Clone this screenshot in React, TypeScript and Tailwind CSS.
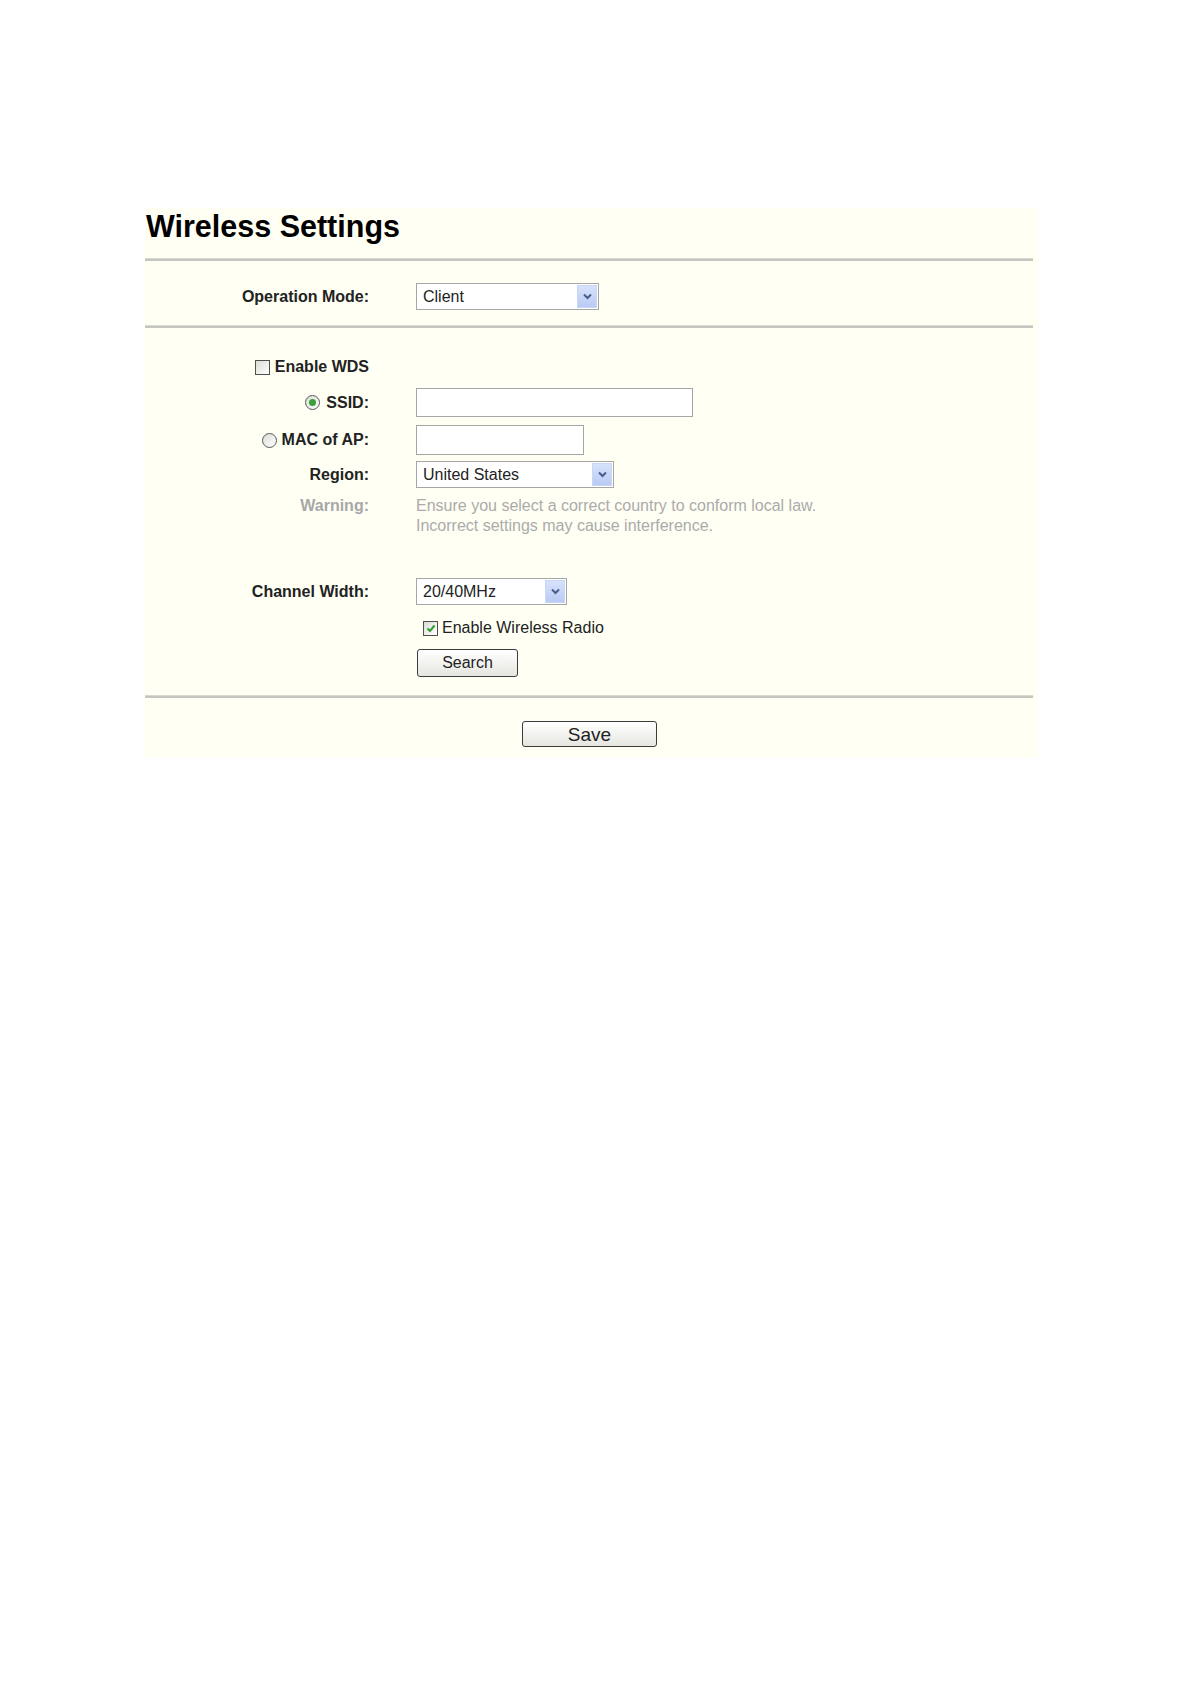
import React from "react";

function Chevron() {
  return (
    <svg width="9" height="7" viewBox="0 0 9 7" className="block">
      <path d="M1 1.5 L4.5 5 L8 1.5" fill="none" stroke="#4a5d8a" strokeWidth="2" />
    </svg>
  );
}

function Select({ value, width }: { value: string; width: string }) {
  return (
    <div className={`${width} h-[27px] flex items-center border border-[#a6a6a6] bg-white pl-[6px] pr-[1px]`}>
      <span className="flex-1 text-[16px] text-[#222] leading-none">{value}</span>
      <div className="w-[20px] h-[23px] flex items-center justify-center bg-gradient-to-b from-[#d7e2fb] to-[#b9cbf4] border border-[#c9d6f4]">
        <Chevron />
      </div>
    </div>
  );
}

function Checkbox({ checked }: { checked?: boolean }) {
  return (
    <div className="w-[15px] h-[15px] shrink-0 border border-[#4f4f4f] bg-gradient-to-br from-[#dcdcd6] to-white flex items-center justify-center">
      {checked ? (
        <svg width="10" height="9" viewBox="0 0 10 9">
          <path d="M1.5 4.5 L4 7 L8.5 1.5" fill="none" stroke="#2ea02e" strokeWidth="2" />
        </svg>
      ) : null}
    </div>
  );
}

function Radio({ checked }: { checked?: boolean }) {
  return (
    <div className="w-[15px] h-[15px] shrink-0 rounded-full border border-[#585858] bg-gradient-to-br from-[#dcdcd6] to-white flex items-center justify-center">
      {checked ? <div className="w-[7px] h-[7px] rounded-full bg-[#3aa03a]" /> : null}
    </div>
  );
}

function Rule() {
  return <div className="h-[3px] bg-[#c6c6c0] border-t border-[#d8d8d2] w-[888px]" />;
}

function Row({ label, className, children }: { label?: React.ReactNode; className: string; children?: React.ReactNode }) {
  return (
    <div className={`flex items-center ${className}`}>
      <div className="w-[224px] flex justify-end items-center text-[16px] font-bold text-[#222] leading-none">{label}</div>
      <div className="ml-[47px] flex items-center">{children}</div>
    </div>
  );
}

export default function App() {
  return (
    <div className="w-[1190px] h-[1684px] bg-white font-['Liberation_Sans',Arial,sans-serif] pt-[208px] pl-[145px]">
      <div className="w-[893px] bg-[#fffff4] pb-[10px]">
        <div className="h-[50px] pt-[2px]">
          <h1 className="text-[30.5px] font-bold text-black leading-[33px] pl-[1px]">Wireless Settings</h1>
        </div>
        <Rule />

        <Row label="Operation Mode:" className="mt-[22px] h-[27px] mb-[15px]">
          <Select value="Client" width="w-[183px]" />
        </Row>
        <Rule />

        <Row
          className="mt-[26px] h-[26px]"
          label={
            <span className="flex items-center">
              <Checkbox />
              <span className="ml-[5px]">Enable WDS</span>
            </span>
          }
        />

        <Row
          className="mt-[8px] h-[29px]"
          label={
            <span className="flex items-center">
              <Radio checked />
              <span className="ml-[6px]">SSID:</span>
            </span>
          }
        >
          <div className="w-[277px] h-[29px] border border-[#a6a6a6] bg-white" />
        </Row>

        <Row
          className="mt-[8px] h-[30px]"
          label={
            <span className="flex items-center">
              <Radio />
              <span className="ml-[5px]">MAC of AP:</span>
            </span>
          }
        >
          <div className="w-[168px] h-[30px] border border-[#a6a6a6] bg-white" />
        </Row>

        <Row label="Region:" className="mt-[6px] h-[27px]">
          <Select value="United States" width="w-[198px]" />
        </Row>

        <div className="flex mt-[8px]">
          <div className="w-[224px] text-right text-[16px] font-bold text-[#a8a8a8] leading-[20px]">Warning:</div>
          <div className="ml-[47px] text-[16px] text-[#ababab] leading-[20px]">
            <div>Ensure you select a correct country to conform local law.</div>
            <div>Incorrect settings may cause interference.</div>
          </div>
        </div>

        <Row label="Channel Width:" className="mt-[42px] h-[27px]">
          <Select value="20/40MHz" width="w-[151px]" />
        </Row>

        <Row className="mt-[13px] h-[20px]">
          <div className="flex items-center ml-[7px]">
            <Checkbox checked />
            <span className="ml-[4px] text-[16px] text-[#222] leading-none">Enable Wireless Radio</span>
          </div>
        </Row>

        <Row className="mt-[11px] h-[28px]">
          <button className="w-[101px] h-[28px] ml-[1px] rounded-[3px] border border-[#3c3c3c] bg-gradient-to-b from-white to-[#e6e6e0] text-[16px] text-[#222] leading-none">
            Search
          </button>
        </Row>

        <div className="mt-[18px]">
          <Rule />
        </div>

        <div className="flex justify-center mt-[23px] pr-[4px]">
          <button className="w-[135px] h-[26px] rounded-[3px] border border-[#3c3c3c] bg-gradient-to-b from-white to-[#e6e6e0] text-[19px] text-[#222] leading-none">
            Save
          </button>
        </div>
      </div>
    </div>
  );
}
